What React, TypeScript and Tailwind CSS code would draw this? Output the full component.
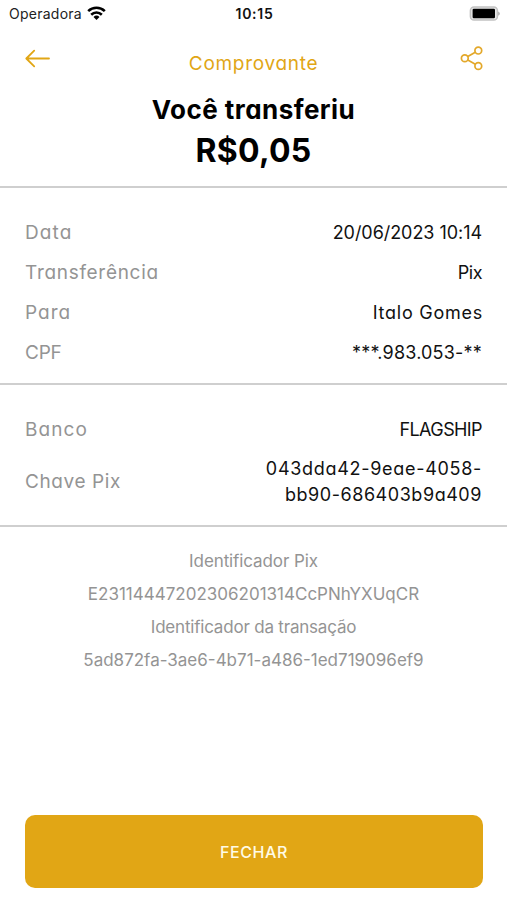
type RowProps = {
  label: string;
  value: string;
  labelClass?: string;
  valueClass?: string;
};

const transferItems: RowProps[] = [
  { label: 'Data', value: '20/06/2023 10:14', labelClass: 'tracking-[1.1px]', valueClass: 'tracking-[-0.05px]' },
  { label: 'Transferência', value: 'Pix', labelClass: 'tracking-[0.7px]', valueClass: 'tracking-[-0.5px]' },
  { label: 'Para', value: 'Italo Gomes', labelClass: 'tracking-[1px]', valueClass: 'tracking-[0.75px] -mr-px' },
  { label: 'CPF', value: '***.983.053-**', labelClass: 'tracking-[-0.2px]', valueClass: 'tracking-[0.2px]' },
];

const Row = ({ label, value, labelClass = '', valueClass = '' }: RowProps) => (
  <div className="flex h-10 items-center justify-between">
    <span className={`text-[19px] text-[#949494] ${labelClass}`}>{label}</span>
    <span className={`text-lg text-[#111111] ${valueClass}`}>{value}</span>
  </div>
);

const StatusBar = () => (
  <div className="grid h-7 grid-cols-3 items-center pl-[9px] pr-[7px] [font-feature-settings:normal]">
    <div className="flex items-center gap-[5px]">
      <span className="text-sm tracking-[0.25px] text-[#222222]">Operadora</span>
      <svg width="19" height="14" viewBox="0 0 19 14" fill="none" stroke="#000" strokeWidth="2.6" className="-mt-0.5">
        <path d="M1.2 5.1a12 12 0 0 1 16.6 0" />
        <path d="M4.2 8.7a7.6 7.6 0 0 1 10.6 0" />
        <path d="M9.5 13.9L6.5 10.9a4.4 4.4 0 0 1 6 0z" fill="#000" stroke="none" />
      </svg>
    </div>
    <span className="text-center text-sm font-semibold tracking-[0.7px] text-[#111111]">10:15</span>
    <div className="flex justify-end">
      <svg width="31" height="15" viewBox="0 0 31 15" className="-mt-0.5">
        <rect x="1.4" y="1" width="27" height="13" rx="3.6" fill="#e8e8e8" stroke="#c2c2c2" strokeWidth="1.5" />
        <rect x="3.6" y="2.8" width="22.4" height="9.4" rx="1.2" fill="#000" />
        <path d="M29.2 5.4v4.4c2.1-.8 2.1-3.6 0-4.4z" fill="#aaa" />
      </svg>
    </div>
  </div>
);

const App = () => {
  return (
    <div className="flex h-[900px] w-full flex-col bg-white font-['Inter',sans-serif] [font-feature-settings:'cv11']">
      <StatusBar />

      <header className="flex h-[158px] flex-col">
        <div className="flex justify-between px-[25px] pt-[18px]">
          <button aria-label="Voltar" className="h-6 w-[26px]">
            <svg width="26" height="24" viewBox="0 0 26 24" fill="none" stroke="#e1a615" strokeWidth="1.8" strokeLinecap="round" strokeLinejoin="round">
              <path d="M24 12.5H1.5M9.2 4.7L1.3 12.5L9.2 20.3" />
            </svg>
          </button>
          <h1 className="mt-1 text-[19px] leading-7 tracking-[0.7px] text-[#e1a615]">Comprovante</h1>
          <button aria-label="Compartilhar" className="h-6 w-[26px]">
            <svg width="27" height="26" viewBox="0 0 27 26" fill="none" stroke="#e3a82a" strokeWidth="1.7">
              <circle cx="8.8" cy="12.3" r="3.4" />
              <circle cx="22.3" cy="4.6" r="3.4" />
              <circle cx="22.3" cy="20" r="3.4" />
              <path d="M11.8 10.6L19.3 6.3M11.8 14L19.3 18.3" />
            </svg>
          </button>
        </div>
        <p className="mt-4 text-center text-[26px] font-bold leading-8 tracking-[0.45px] text-black">Você transferiu</p>
        <p className="mt-[5px] text-center text-[32px] font-bold leading-10 tracking-[0.3px] text-black">R$0,05</p>
      </header>

      <section className="border-t-2 border-[#cfcfcf] px-[25px] pb-2.5 pt-[25px]">
        {transferItems.map((item) => (
          <Row key={item.label} {...item} />
        ))}
      </section>

      <section className="border-t-2 border-[#cfcfcf] px-[25px] pb-[17px] pt-[25px]">
        <Row label="Banco" value="FLAGSHIP" labelClass="tracking-[1.1px]" valueClass="tracking-[-0.6px]" />
        <div className="mt-1.5 flex items-center justify-between">
          <span className="text-[19px] tracking-[0.6px] text-[#949494]">Chave Pix</span>
          <span className="text-right text-lg leading-[26px] tracking-[0.7px] text-[#111111]">
            043dda42-9eae-4058-
            <br />
            <span className="tracking-[0.55px]">bb90-686403b9a409</span>
          </span>
        </div>
      </section>

      <section className="flex flex-col border-t-2 border-[#cfcfcf] pt-[18px] text-center text-[17px] leading-[33px] text-[#949494] [font-feature-settings:normal]">
        <span className="tracking-[-0.1px]">Identificador Pix</span>
        <span>E23114447202306201314CcPNhYXUqCR</span>
        <span className="tracking-[-0.2px]">Identificador da transação</span>
        <span>5ad872fa-3ae6-4b71-a486-1ed719096ef9</span>
      </section>

      <button className="ml-[25px] mr-6 mb-3 mt-auto h-[73px] rounded-[10px] bg-[#e1a615] text-base font-medium tracking-[0.6px] text-[#fffbe6]">
        FECHAR
      </button>
    </div>
  );
};

export default App;
